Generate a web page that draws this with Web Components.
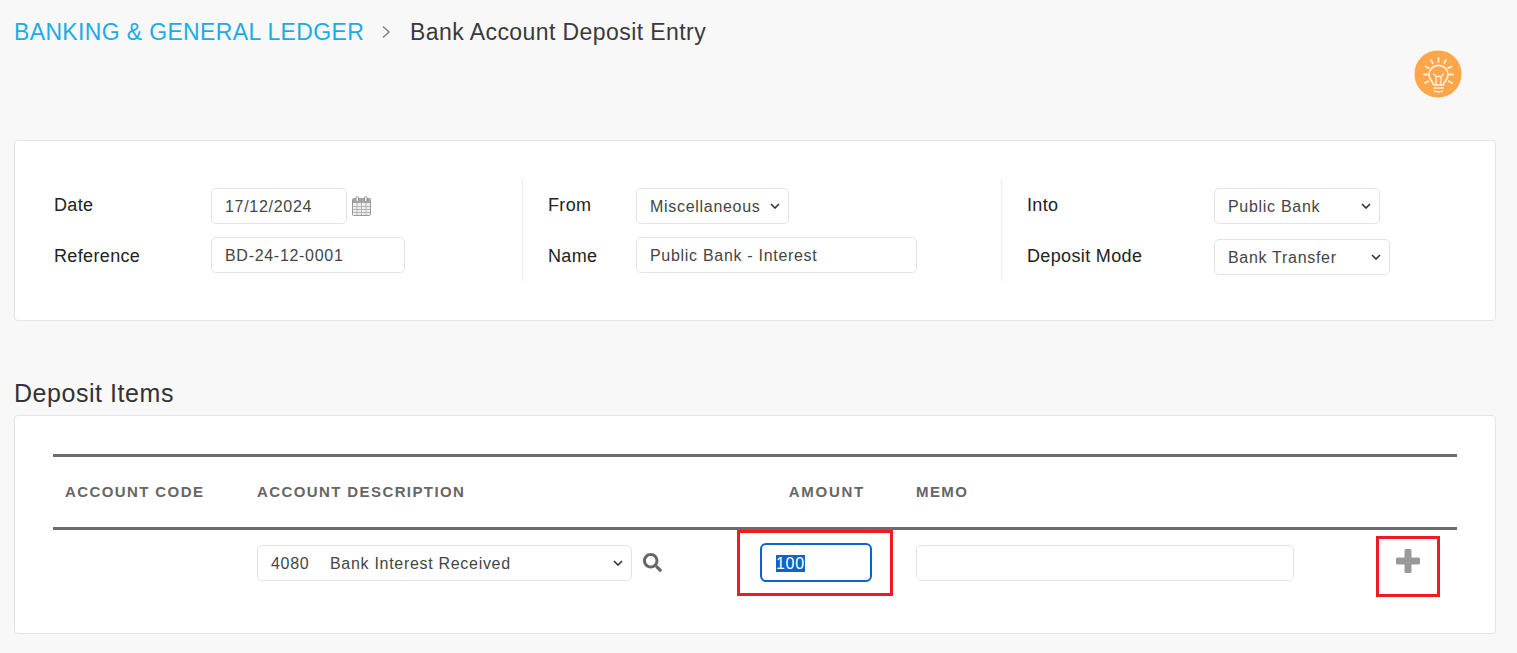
<!DOCTYPE html>
<html lang="en">
<head>
<meta charset="utf-8">
<title>Bank Account Deposit Entry</title>
<style>
  html, body { margin: 0; height: 100%; }
  body {
    background: #f8f8f8;
    color: #333;
    font-family: "Liberation Sans", Arial, sans-serif;
    overflow: hidden;
  }
</style>
</head>
<body>
<deposit-page>
  <page-crumb slot="crumb" parent="BANKING &amp; GENERAL LEDGER">Bank Account Deposit Entry</page-crumb>
  <tip-badge slot="tip"></tip-badge>

  <panel-card slot="header">
    <form-column style="--label-w: 157px; --pad: 39px">
      <form-row label="Date">
        <text-box style="--w: 136px">17/12/2024</text-box>
        <calendar-icon></calendar-icon>
      </form-row>
      <form-row label="Reference" style="--gap: 13px; --label-pt: 3px; --label-pb: 0px">
        <text-box style="--w: 194px">BD-24-12-0001</text-box>
      </form-row>
    </form-column>
    <form-column divided style="--label-w: 88px; --pad: 25px">
      <form-row label="From">
        <select-box style="--w: 153px">Miscellaneous</select-box>
      </form-row>
      <form-row label="Name" style="--gap: 13px; --label-pt: 3px; --label-pb: 0px">
        <text-box style="--w: 281px">Public Bank - Interest</text-box>
      </form-row>
    </form-column>
    <form-column divided style="--label-w: 187px; --pad: 25px">
      <form-row label="Into">
        <select-box style="--w: 166px">Public Bank</select-box>
      </form-row>
      <form-row label="Deposit Mode" style="--gap: 15px">
        <select-box style="--w: 176px">Bank Transfer</select-box>
      </form-row>
    </form-column>
  </panel-card>

  <span slot="title">Deposit Items</span>

  <items-table slot="items">
    <span slot="h1">ACCOUNT CODE</span>
    <span slot="h2">ACCOUNT DESCRIPTION</span>
    <span slot="h3">AMOUNT</span>
    <span slot="h4">MEMO</span>
    <select-box slot="account" style="--w: 375px"><span style="white-space: pre">4080    Bank Interest Received</span></select-box>
    <text-box slot="amount" focused style="--w: 112px"><selected-text>100</selected-text></text-box>
    <text-box slot="memo" style="--w: 378px"></text-box>
  </items-table>
</deposit-page>

<script>
const define = (name, css, html) => {
  customElements.define(name, class extends HTMLElement {
    constructor() {
      super()
      this.attachShadow({ mode: 'open' })
    }

    connectedCallback() {
      const markup = typeof html === 'function' ? html(this) : html
      this.shadowRoot.innerHTML = `<style>${css}</style>${markup}`
    }
  })
}

define('deposit-page', `
  :host { display: block; padding: 0 21px 0 14px; }
  .top { display: flex; justify-content: space-between; height: 140px; }
  .tip { padding: 50px 34px 0 0; }
  .title { font-size: 25px; line-height: 30px; letter-spacing: .55px; color: #333; margin: 57px 0 7px; }
`, `
  <div class="top"><slot name="crumb"></slot><div class="tip"><slot name="tip"></slot></div></div>
  <slot name="header"></slot>
  <div class="title"><slot name="title"></slot></div>
  <slot name="items"></slot>
`)

define('page-crumb', `
  :host { display: flex; align-items: center; height: 30px; margin-top: 17px; font-size: 23px; letter-spacing: .42px; color: #3a3a3a; }
  a { color: #1cace4; text-decoration: none; letter-spacing: .35px; }
  svg { width: 11px; height: 14px; margin: 0 18px 0 17px; }
`, el => `
  <a href="#">${el.getAttribute('parent').replace('&', '&amp;')}</a>
  <svg viewBox="0 0 11 14"><path d="M2 1.5 8 7 2 12.5" fill="none" stroke="#888" stroke-width="1.6"/></svg>
  <slot></slot>
`)

define('tip-badge', `
  :host { display: block; width: 48px; height: 48px; }
  svg { display: block; overflow: visible; }
`, `
  <svg width="48" height="48" viewBox="0 0 48 48">
    <circle cx="24" cy="24" r="24" fill="#ffa64a" stroke="#fff" stroke-opacity=".8"/>
    <g fill="none" stroke="#fff" stroke-linecap="round" stroke-opacity=".8">
      <path stroke-width="1.7" d="M19.500 35c-.3-3.500-4.500-5.200-4.500-10.200a9.500 9.500 0 0 1 19 0c0 5-4.200 6.700-4.500 10.200z"/>
      <path stroke-width="1.400" d="M22 34.500v-8l-2.300-2.600M27 34.500v-8l2.300-2.600M22 26.500h5"/>
      <path stroke-width="1.700" d="M20 38h9M20.500 41c1.200 1.200 6.800 1.200 8 0"/>
      <path stroke-width="1.800" d="M24.500 8v4M17 10l1.800 3.200M32 10l-1.800 3.200M11.500 16.500l3.300 1.600M37.500 16.500l-3.300 1.600M10 24.500h4M35 24.500h4M11 33l3.300-1.800M38 33l-3.300-1.800"/>
    </g>
  </svg>
`)

define('panel-card', `
  :host {
    display: flex;
    box-sizing: border-box;
    height: 181px;
    padding: 39px 0 38px;
    background: #fff;
    border: 1px solid #e5e5e5;
    border-radius: 4px;
  }
`, `<slot></slot>`)

define('form-column', `
  :host { display: block; box-sizing: border-box; padding: 8px 0 0 var(--pad); }
  :host(:nth-child(1)) { width: 507px; }
  :host(:nth-child(2)) { width: 479px; }
  :host(:nth-child(3)) { flex: 1; }
  :host([divided]) { border-left: 1px dotted #dedede; }
`, `<slot></slot>`)

define('form-row', `
  :host { display: flex; align-items: center; margin-top: var(--gap, 0); }
  label {
    width: var(--label-w);
    flex: none;
    padding: var(--label-pt, 0) 0 var(--label-pb, 2px);
    font-size: 18px;
    letter-spacing: .35px;
    color: #222;
  }
`, el => `<label>${el.getAttribute('label')}</label><slot></slot>`)

const fieldCss = `
  :host {
    display: flex;
    align-items: center;
    box-sizing: border-box;
    width: var(--w);
    height: 36px;
    padding: 0 13px;
    background: #fff;
    border: 1px solid #e3e3e3;
    border-radius: 5px;
    font-size: 16px;
    letter-spacing: .7px;
    color: #454545;
    white-space: nowrap;
  }
  .value { padding-top: 2px; }
`

define('text-box', fieldCss + `
  :host([focused]) { height: 39px; margin-left: -1px; border: 2px solid #0b63ce; border-radius: 6px; color: #fff; padding: 0 14px; }
`, `<div class="value"><slot></slot></div>`)

define('select-box', fieldCss + `
  svg { margin-left: auto; margin-right: -5px; flex: none; }
`, `
  <div class="value"><slot></slot></div>
  <svg width="10" height="6" viewBox="0 0 10 6"><path d="M1 1l4 4 4-4" fill="none" stroke="#333" stroke-width="1.6"/></svg>
`)

define('selected-text', `
  :host { background: #0a66c8; color: #fff; letter-spacing: .7px; line-height: 18px; }
`, `<slot></slot>`)

define('calendar-icon', `
  :host { display: block; width: 19px; height: 20px; margin-left: 5px; }
  svg { display: block; }
`, `
  <svg width="19" height="20" viewBox="0 0 19 20">
    <rect x=".5" y="2.5" width="18" height="17" rx="1" fill="#eee" stroke="#9a9a9a"/>
    <rect x="1" y="3" width="17" height="4" fill="#a5a5a5"/>
    <path d="M1 10.500h17M1 13.500h17M1 16.500h17M5 7v12M9.500 7v12M14 7v12" stroke="#b5b5b5"/>
    <rect x="4" y=".5" width="2.500" height="5" rx="1.200" fill="#eee" stroke="#8a8a8a" stroke-width=".8"/>
    <rect x="12.500" y=".5" width="2.500" height="5" rx="1.200" fill="#eee" stroke="#8a8a8a" stroke-width=".8"/>
  </svg>
`)

define('items-table', `
  :host {
    display: block;
    box-sizing: border-box;
    height: 219px;
    padding: 38px 38px 0;
    background: #fff;
    border: 1px solid #e5e5e5;
    border-radius: 4px;
  }
  .row { display: grid; grid-template-columns: 192px 504px 155px 402px 1fr; }
  .head {
    height: 70px;
    align-items: center;
    border-top: 3px solid #6b6b6b;
    border-bottom: 3px solid #6b6b6b;
    font-size: 15px;
    font-weight: bold;
    letter-spacing: 1.4px;
    color: #666;
  }
  .cell { padding: 0 12px 2px; }
  .head .amount { text-align: right; padding-right: 39px; letter-spacing: 1.75px; }
  .body { height: 67px; align-items: center; }
  .body .cell { display: flex; align-items: center; position: relative; box-sizing: border-box; height: 67px; }
  .search { margin-left: 11px; }
  .mark { position: absolute; box-sizing: border-box; border: 3px solid #ed1c24; }
  .mark-amount { left: -12px; top: 0; width: 156px; height: 66px; }
  .mark-add { left: 70px; top: 6px; width: 64px; height: 61px; }
  .add { display: block; margin: 0 0 3px 78px; }
`, `
  <div class="row head">
    <div class="cell"><slot name="h1"></slot></div>
    <div class="cell"><slot name="h2"></slot></div>
    <div class="cell amount"><slot name="h3"></slot></div>
    <div class="cell"><slot name="h4"></slot></div>
    <div class="cell"></div>
  </div>
  <div class="row body">
    <div class="cell"></div>
    <div class="cell">
      <slot name="account"></slot>
      <svg class="search" width="19" height="19" viewBox="0 0 512 512"><path fill="#666" d="M505 442.700L405.300 343c-4.500-4.500-10.600-7-17-7H372c27.600-35.300 44-79.700 44-128C416 93.100 322.900 0 208 0S0 93.100 0 208s93.100 208 208 208c48.300 0 92.700-16.400 128-44v16.300c0 6.400 2.500 12.500 7 17l99.700 99.700c9.400 9.400 24.600 9.400 33.900 0l28.300-28.300c9.400-9.400 9.400-24.600.1-34zM208 336c-70.700 0-128-57.200-128-128 0-70.700 57.200-128 128-128 70.700 0 128 57.200 128 128 0 70.700-57.200 128-128 128z"/></svg>
    </div>
    <div class="cell"><slot name="amount"></slot><div class="mark mark-amount"></div></div>
    <div class="cell"><slot name="memo"></slot></div>
    <div class="cell">
      <svg class="add" width="24" height="24" viewBox="0 0 24 24"><path fill="#999" d="M10 0h4A1.500 1.500 0 0 1 15.500 1.500V8.500h7A1.500 1.500 0 0 1 24 10v4a1.500 1.500 0 0 1-1.500 1.500h-7v7A1.500 1.500 0 0 1 14 24h-4a1.500 1.500 0 0 1-1.500-1.500v-7h-7A1.500 1.500 0 0 1 0 14v-4a1.500 1.500 0 0 1 1.500-1.500h7V1.500A1.500 1.500 0 0 1 10 0z"/></svg>
      <div class="mark mark-add"></div>
    </div>
  </div>
`)
</script>
</body>
</html>
